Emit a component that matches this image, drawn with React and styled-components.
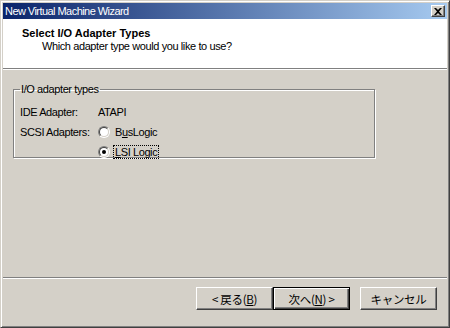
import styled, { createGlobalStyle } from "styled-components";

const Global = createGlobalStyle`
  html, body { margin: 0; padding: 0; background: #d4d0c8; }
  body {
    font-family: "Liberation Sans", "Noto Sans CJK JP", sans-serif;
    font-size: 11px;
    letter-spacing: -0.4px;
    color: #000;
  }
`;

const Window = styled.div`
  width: 450px;
  height: 328px;
  box-sizing: border-box;
  background: #d4d0c8;
  border: 1px solid;
  border-color: #d4d0c8 #404040 #404040 #d4d0c8;
  box-shadow: inset 1px 1px 0 #fff, inset -1px -1px 0 #808080;
  padding: 2px;
  display: flex;
  flex-direction: column;
`;

const TitleBar = styled.div`
  height: 16px;
  display: flex;
  align-items: center;
  justify-content: space-between;
  padding: 0 2px 0 2px;
  background: linear-gradient(to right, #0a246a, #a6caf0);
  color: #fff;
  font-size: 11px;
  letter-spacing: -0.55px;
`;

const CloseBtn = styled.div`
  width: 14px;
  height: 12px;
  box-sizing: border-box;
  background: #d4d0c8;
  border: 1px solid;
  border-color: #fff #404040 #404040 #fff;
  box-shadow: inset -1px -1px 0 #808080;
  display: flex;
  align-items: center;
  justify-content: center;
`;

const Header = styled.div`
  height: 50px;
  background: #fff;
  border-bottom: 1px solid #808080;
  box-shadow: 0 1px 0 #fff;
  padding: 8px 0 0 19px;
  box-sizing: border-box;
`;

const HeadTitle = styled.div`
  font-weight: bold;
  font-size: 11px;
  line-height: 13px;
  letter-spacing: 0;
`;

const HeadSub = styled.div`
  padding-left: 20px;
  line-height: 13px;
`;

const Content = styled.div`
  flex: 1;
  padding: 14px 0 0 10px;
`;

const Group = styled.fieldset`
  width: 362px;
  height: 75px;
  box-sizing: border-box;
  margin: 0;
  padding: 6px 0 0 6px;
  border: 1px solid #808080;
  box-shadow: 1px 1px 0 #fff, inset 1px 1px 0 #fff;
`;

const Legend = styled.legend`
  padding: 0 1px;
  margin-left: 0;
  line-height: 13px;
`;

const Row = styled.div`
  display: flex;
  align-items: center;
  height: 20px;
`;

const Label = styled.div`
  width: 78px;
`;

const Radio = styled.span`
  width: 12px;
  height: 12px;
  box-sizing: border-box;
  border-radius: 50%;
  border: 1px solid;
  border-color: #808080 #fff #fff #808080;
  background: #d4d0c8;
  display: inline-flex;
  align-items: center;
  justify-content: center;
  margin-right: 4px;
  &::before {
    content: "";
    width: 10px;
    height: 10px;
    box-sizing: border-box;
    border-radius: 50%;
    border: 1px solid;
    border-color: #404040 #d4d0c8 #d4d0c8 #404040;
    background: #fff;
  }
  &::after {
    content: "";
    position: absolute;
    width: 4px;
    height: 4px;
    border-radius: 50%;
    background: ${(p) => (p.$on ? "#000" : "transparent")};
  }
`;

const Option = styled.span`
  display: inline-flex;
  align-items: center;
  position: relative;
`;

const OptText = styled.span`
  padding: 0 1px;
  outline: ${(p) => (p.$focus ? "1px dotted #000" : "none")};
`;

const Footer = styled.div`
  height: 38px;
  border-top: 1px solid #808080;
  box-shadow: inset 0 1px 0 #fff;
  display: flex;
  justify-content: flex-end;
  align-items: flex-start;
  padding: 9px 10px 0 0;
`;

const Button = styled.button`
  width: 77px;
  height: 23px;
  box-sizing: border-box;
  margin: 0 0 0 ${(p) => p.$gap || 0}px;
  font-family: "Noto Sans CJK JP", "Liberation Sans", sans-serif;
  font-size: 11.5px;
  letter-spacing: -0.3px;
  white-space: pre;
  background: #d4d0c8;
  border: 1px solid;
  border-color: ${(p) => (p.$default ? "#000" : "#fff #404040 #404040 #fff")};
  box-shadow: ${(p) =>
    p.$default
      ? "inset 1px 1px 0 #fff, inset -1px -1px 0 #404040, inset -2px -2px 0 #808080"
      : "inset -1px -1px 0 #808080"};
  padding: 0;
  color: #000;
`;

const U = styled.u`
  text-underline-offset: 1px;
`;

export default function App() {
  return (
    <>
      <Global />
      <Window>
        <TitleBar>
          <span>New Virtual Machine Wizard</span>
          <CloseBtn>
            <svg width="8" height="7" viewBox="0 0 8 7">
              <path d="M0 0h2l2 2 2-2h2L5 3.5 8 7H6L4 5 2 7H0l3-3.5z" fill="#000" />
            </svg>
          </CloseBtn>
        </TitleBar>
        <Header>
          <HeadTitle>Select I/O Adapter Types</HeadTitle>
          <HeadSub>Which adapter type would you like to use?</HeadSub>
        </Header>
        <Content>
          <Group>
            <Legend>I/O adapter types</Legend>
            <Row>
              <Label>IDE Adapter:</Label>
              <span>ATAPI</span>
            </Row>
            <Row>
              <Label>SCSI Adapters:</Label>
              <Option>
                <Radio />
                <OptText>B<U>u</U>sLogic</OptText>
              </Option>
            </Row>
            <Row>
              <Label />
              <Option>
                <Radio $on />
                <OptText $focus><U>L</U>SI Logic</OptText>
              </Option>
            </Row>
          </Group>
        </Content>
        <Footer>
          <Button>{"< 戻る("}<U>B</U>{")"}</Button>
          <Button $default>{"次へ("}<U>N</U>{") >"}</Button>
          <Button $gap={10}>キャンセル</Button>
        </Footer>
      </Window>
    </>
  );
}
